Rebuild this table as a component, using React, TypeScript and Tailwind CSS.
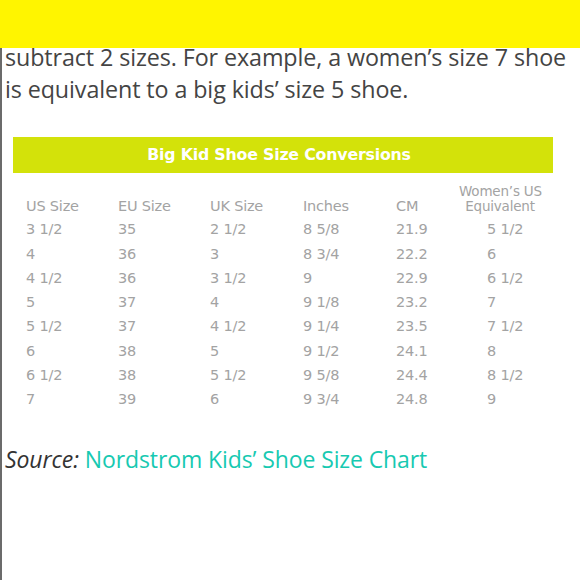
import React from 'react';

const rows = [
  ['3 1/2', '35', '2 1/2', '8 5/8', '21.9', '5 1/2'],
  ['4', '36', '3', '8 3/4', '22.2', '6'],
  ['4 1/2', '36', '3 1/2', '9', '22.9', '6 1/2'],
  ['5', '37', '4', '9 1/8', '23.2', '7'],
  ['5 1/2', '37', '4 1/2', '9 1/4', '23.5', '7 1/2'],
  ['6', '38', '5', '9 1/2', '24.1', '8'],
  ['6 1/2', '38', '5 1/2', '9 5/8', '24.4', '8 1/2'],
  ['7', '39', '6', '9 3/4', '24.8', '9'],
];

const cols = ['w-[92px]', 'w-[92px]', 'w-[93px]', 'w-[93px]', 'w-[91px]', 'w-[80px]'];

const App: React.FC = () => {
  return (
    <div className="w-[580px] h-[580px] bg-white overflow-hidden flex flex-col">
      <div className="h-[48px] bg-[#fff500] shrink-0" />
      <div className="flex-1 border-l-2 border-[#6b6b6b] pl-[3px]">
        <p className="font-['Open_Sans',sans-serif] text-[23.3px] leading-[32px] text-[#444] -mt-[7px] tracking-[-0.1px]">
          subtract 2 sizes. For example, a women’s size 7 shoe is equivalent to a big kids’ size 5 shoe.
        </p>

        <div className="mt-[32px] ml-[8px] w-[540px] h-[36px] bg-[#d3e20a] flex items-center justify-center pr-[8px]">
          <span className="font-['DejaVu_Sans',sans-serif] font-bold text-[15.8px] text-white tracking-[-0.2px]">
            Big Kid Shoe Size Conversions
          </span>
        </div>

        <div className="mt-[7px] ml-[21px] font-['DejaVu_Sans',sans-serif] text-[14.5px] text-[#a3a3a3] tracking-[-0.2px]">
          <div className="flex items-end h-[38px]">
            <div className={cols[0]}>US Size</div>
            <div className={cols[1]}>EU Size</div>
            <div className={cols[2]}>UK Size</div>
            <div className={cols[3]}>Inches</div>
            <div className={cols[4]}>CM</div>
            <div className="-ml-[28px] mb-[4px] w-[82px] text-center text-[13.5px] leading-[15px] whitespace-nowrap">
              Women’s US
              <br />
              Equivalent
            </div>
          </div>
          {rows.map((r, i) => (
            <div key={i} className="flex items-center h-[24.25px]">
              {r.map((c, j) => (
                <div key={j} className={cols[j]}>
                  {c}
                </div>
              ))}
            </div>
          ))}
        </div>

        <p className="mt-[31px] font-['Open_Sans',sans-serif] text-[23px] leading-[32px] tracking-[-0.1px]">
          <span className="italic text-[#333]">Source:</span>{' '}
          <span className="text-[#17c9b1]">Nordstrom Kids’ Shoe Size Chart</span>
        </p>
      </div>
    </div>
  );
};

export default App;
